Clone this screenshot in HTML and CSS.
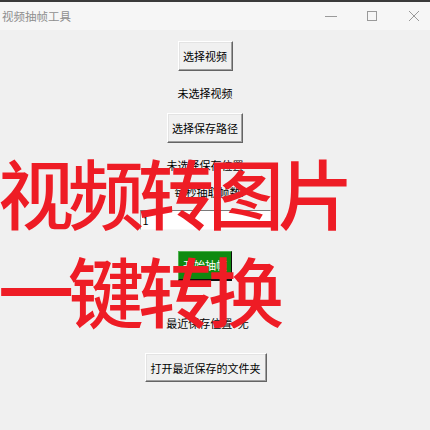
FILE: index.html
```html
<!DOCTYPE html>
<html lang="zh-CN">
<head>
<meta charset="utf-8">
<title>视频抽帧工具</title>
<link rel="stylesheet" href="styles.css">
</head>
<body>
<div class="window">
  <div class="titlebar">
    <span class="title">视频抽帧工具</span>
    <div class="controls">
      <svg class="ctl min" width="12" height="12" viewBox="0 0 12 12"><path d="M0 6.5H12" stroke="#9a9a9a" stroke-width="1"/></svg>
      <svg class="ctl max" width="10" height="10" viewBox="0 0 10 10"><rect x="0.5" y="0.5" width="9" height="9" fill="none" stroke="#9a9a9a" stroke-width="1"/></svg>
      <svg class="ctl close" width="10" height="10" viewBox="0 0 10 10"><path d="M0 0L10 10M10 0L0 10" stroke="#9a9a9a" stroke-width="1"/></svg>
    </div>
  </div>
  <div class="content">
    <button class="btn btn-video">选择视频</button>
    <div class="label label-video">未选择视频</div>
    <button class="btn btn-path">选择保存路径</button>
    <div class="label label-path">未选择保存位置</div>
    <div class="label label-fps">每秒抽取帧数:</div>
    <div class="entry">1</div>
    <button class="btn-start">开始抽帧</button>
    <div class="label label-recent">最近保存位置: 无</div>
    <button class="btn btn-open">打开最近保存的文件夹</button>
  </div>
  <div class="overlay">
    <div class="ov-line">视频转图片</div>
    <div class="ov-line">一键转换</div>
  </div>
</div>
</body>
</html>
```

FILE: styles.css
```css
html, body {
  margin: 0;
  padding: 0;
}
body {
  width: 430px;
  height: 430px;
  overflow: hidden;
  font-family: "Noto Sans CJK SC", "Noto Sans", sans-serif;
  font-size: 11px;
  color: #000;
}
.window {
  position: relative;
  width: 430px;
  height: 430px;
  background: #f0f0f0;
  overflow: hidden;
}
.titlebar {
  height: 28px;
  border-top: 2px solid #3a3a3a;
  background: #f6f6f6;
  display: flex;
  align-items: center;
  justify-content: space-between;
  padding-left: 2px;
}
.title {
  color: #8f8f8f;
  font-size: 11.5px;
  line-height: 16px;
}
.controls {
  display: flex;
  align-items: center;
  gap: 30px;
  padding-right: 11px;
}
.ctl.max { margin-left: 0; }
.ctl.close { margin-left: 2px; }

.content {
  display: flex;
  flex-direction: column;
  align-items: center;
  padding-right: 20px;
}
.btn {
  font-family: inherit;
  font-size: 11px;
  color: #000;
  background: #f0f0f0;
  height: 30px;
  padding: 0;
  border: 1px solid;
  border-color: #ffffff #646464 #646464 #ffffff;
  box-shadow: inset -1px -1px 0 #a0a0a0, inset 1px 1px 0 #e3e3e3;
  line-height: 28px;
  text-align: center;
}
.btn-video { width: 55px; margin-top: 11px; }
.btn-path { width: 76px; margin-top: 12px; }
.btn-open { width: 122px; height: 29px; margin-top: 22px; margin-left: 1px; }
.label {
  line-height: 16px;
  height: 16px;
  white-space: nowrap;
}
.label-video { margin-top: 14px; }
.label-path { margin-top: 14px; }
.label-fps { margin-top: 11px; margin-left: 8px; }
.entry {
  margin-top: 10px;
  width: 131px;
  height: 20px;
  box-sizing: border-box;
  background: #ffffff;
  border-top: 1px solid #7a7a7a;
  border-left: 1px solid #a0a0a0;
  border-right: 1px solid #e8e8e8;
  border-bottom: 1px solid #f7f7f7;
  padding-left: 2px;
  line-height: 18px;
  font-size: 11px;
  text-align: left;
}
.btn-start {
  margin-top: 21px;
  width: 54px;
  height: 30px;
  padding: 0;
  font-family: inherit;
  font-size: 11px;
  color: #ffffff;
  background: #0e8a10;
  border: 1px solid;
  border-color: #4fb24f #0d0d0d #0d0d0d #4fb24f;
  border-bottom-width: 2px;
  line-height: 27px;
  text-align: center;
}
.label-recent { margin-top: 34px; margin-left: 5px; }

.overlay {
  position: absolute;
  left: -2px;
  top: 142px;
  color: #ee1c25;
  font-family: "Noto Sans CJK SC", sans-serif;
  font-weight: 500;
  font-size: 76px;
  letter-spacing: -6px;
  line-height: 98px;
  white-space: nowrap;
  pointer-events: none;
}
```
